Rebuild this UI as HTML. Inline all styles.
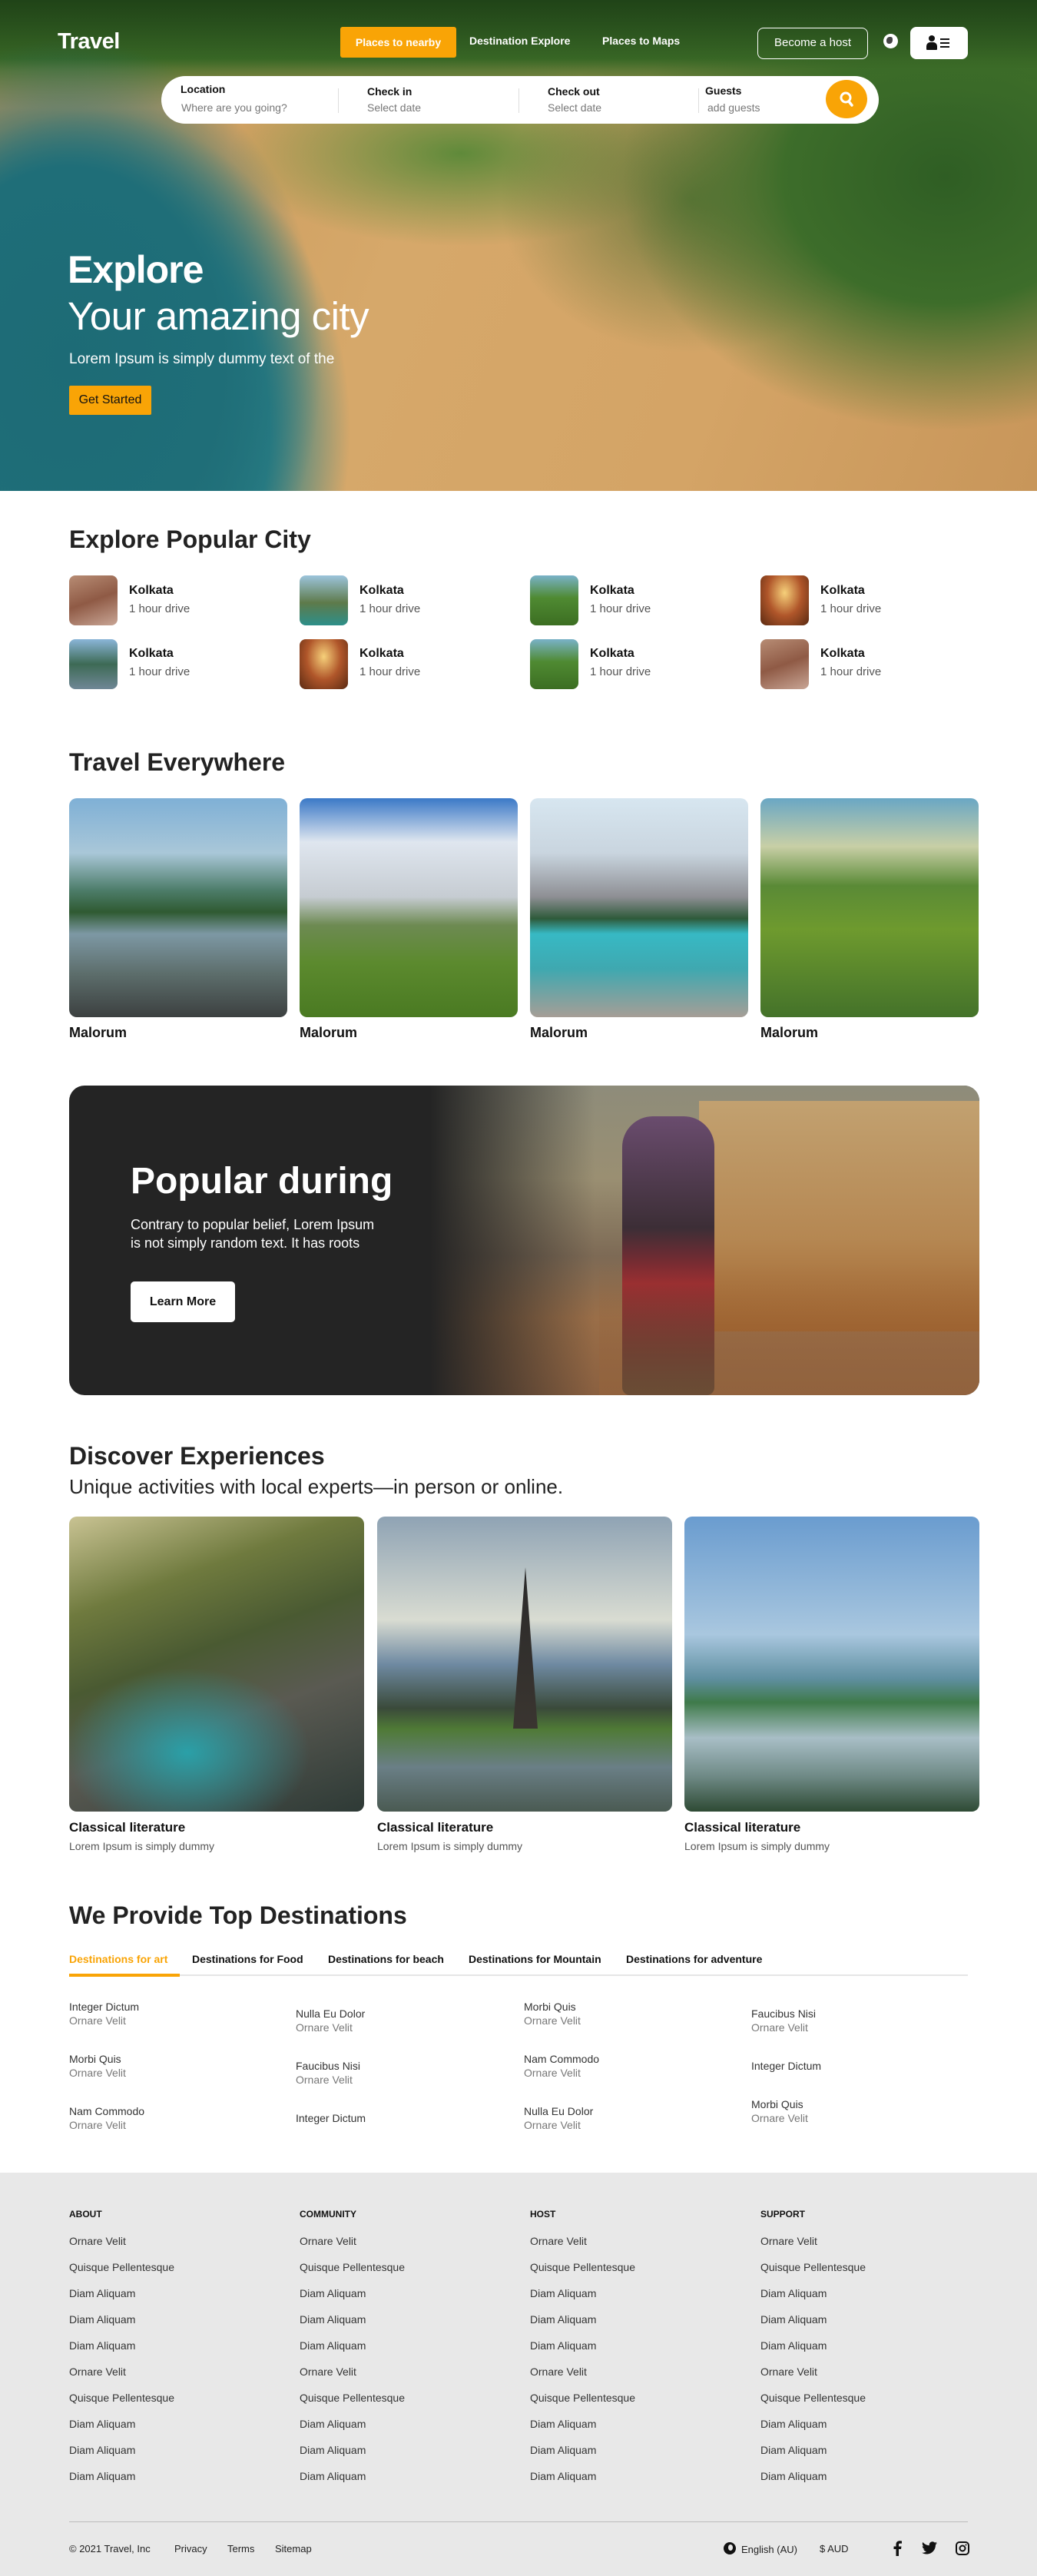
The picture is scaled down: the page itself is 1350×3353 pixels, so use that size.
<!DOCTYPE html>
<html><head><meta charset="utf-8"><style>
*{margin:0;padding:0;box-sizing:border-box}
body{width:1350px;height:3353px;position:relative;font-family:"Liberation Sans",Arial,sans-serif;background:#fff;color:#222;overflow:hidden}
.a{position:absolute}
.hero{left:0;top:0;width:1350px;height:639px;overflow:hidden;
background:
radial-gradient(ellipse 330px 420px at 90px 470px,#1d6b76 0%,#1f6e78 60%,rgba(31,110,120,0) 100%),
radial-gradient(ellipse 420px 520px at 120px 560px,#1a5f6b 0%,#2a7f86 55%,rgba(42,127,134,0) 80%),
linear-gradient(180deg,#2f5a22 0%,#3b6b27 12%,rgba(90,110,50,.0) 22%),
radial-gradient(ellipse 420px 330px at 1230px 230px,#2f5e24 0%,#3d6d2a 50%,rgba(53,101,42,0) 100%),
radial-gradient(ellipse 250px 200px at 900px 260px,rgba(60,100,40,.7) 0%,rgba(60,100,40,0) 100%),
radial-gradient(ellipse 300px 120px at 600px 200px,#5f8a3a 0%,rgba(95,138,58,0) 100%),
linear-gradient(110deg,#c69656 0%,#d6a86a 40%,#d4a466 70%,#c8965a 100%)}
.nav{color:#fff;font-size:15px;font-weight:bold}
.th{width:63px;height:65px;border-radius:8px}
.ct{font-size:16px;font-weight:bold;color:#111}
.cs{font-size:15px;color:#555}
.card{border-radius:10px}
h2{font-size:32px;font-weight:bold;color:#222;position:absolute;line-height:1}
.lab{font-size:18px;font-weight:bold;color:#111}
.dt{font-size:14px;color:#333}
.ds{font-size:14px;color:#777}
.fh{font-size:12px;font-weight:bold;color:#111}
.fl{font-size:14px;color:#333}
</style></head><body>

<div class="a hero"></div>
<div class="a" style="left:0;top:0;width:1350px;height:90px;background:linear-gradient(180deg,rgba(20,50,15,.55),rgba(20,50,15,0))"></div>

<div class="a" style="left:75px;top:38px;font-size:29px;font-weight:bold;color:#fff;letter-spacing:-0.5px">Travel</div>
<div class="a nav" style="left:443px;top:35px;width:151px;height:40px;background:#f9a406;border-radius:3px;text-align:center;line-height:40px;font-size:14px">Places to nearby</div>
<div class="a nav" style="left:611px;top:45px;font-size:14px">Destination Explore</div>
<div class="a nav" style="left:784px;top:45px;font-size:14px">Places to Maps</div>
<div class="a" style="left:986px;top:36px;width:144px;height:41px;border:1.5px solid #fff;border-radius:8px;color:#fff;font-size:15px;text-align:center;line-height:38px">Become a host</div>
<div class="a" style="left:1150px;top:44px;width:19px;height:19px;border-radius:50%;background:#fff"><div style="margin:4px 0 0 4px;width:8px;height:9px;border-radius:50% 30% 50% 40%;background:#444"></div></div>
<div class="a" style="left:1185px;top:35px;width:75px;height:42px;background:#fff;border-radius:8px">
<div class="a" style="left:24px;top:11px;width:8px;height:8px;border-radius:50%;background:#111"></div>
<div class="a" style="left:21px;top:20px;width:14px;height:10px;border-radius:5px 5px 1px 1px;background:#111"></div>
<div class="a" style="left:39px;top:15px;width:12px;height:2px;background:#111;box-shadow:0 5px 0 #111,0 10px 0 #111"></div>
</div>

<div class="a" style="left:210px;top:99px;width:934px;height:62px;background:#fff;border-radius:31px"></div>
<div class="a" style="left:235px;top:108px;font-size:14px;font-weight:bold;color:#111">Location</div>
<div class="a" style="left:236px;top:132px;font-size:14px;color:#777">Where are you going?</div>
<div class="a" style="left:440px;top:115px;width:1px;height:32px;background:#ddd"></div>
<div class="a" style="left:478px;top:111px;font-size:14px;font-weight:bold;color:#111">Check in</div>
<div class="a" style="left:478px;top:132px;font-size:14px;color:#777">Select date</div>
<div class="a" style="left:675px;top:115px;width:1px;height:32px;background:#ddd"></div>
<div class="a" style="left:713px;top:111px;font-size:14px;font-weight:bold;color:#111">Check out</div>
<div class="a" style="left:713px;top:132px;font-size:14px;color:#777">Select date</div>
<div class="a" style="left:909px;top:115px;width:1px;height:32px;background:#ddd"></div>
<div class="a" style="left:918px;top:110px;font-size:14px;font-weight:bold;color:#111">Guests</div>
<div class="a" style="left:921px;top:132px;font-size:14px;color:#777">add guests</div>
<div class="a" style="left:1075px;top:104px;width:54px;height:50px;border-radius:50%;background:#f9a406">
<svg width="54" height="50" viewBox="0 0 54 50"><circle cx="26" cy="23" r="6" fill="none" stroke="#fff" stroke-width="3"/><line x1="30" y1="28" x2="34" y2="33" stroke="#fff" stroke-width="3.5" stroke-linecap="round"/></svg></div>

<div class="a" style="left:88px;top:322px;font-size:50px;font-weight:bold;color:#fff;letter-spacing:-1px">Explore</div>
<div class="a" style="left:88px;top:382px;font-size:51px;color:#fff;letter-spacing:-0.5px">Your amazing city</div>
<div class="a" style="left:90px;top:457px;font-size:19px;color:#fff">Lorem Ipsum is simply dummy text of the</div>
<div class="a" style="left:90px;top:502px;width:107px;height:38px;background:#f9a406;color:#111;font-size:16px;text-align:center;line-height:38px;border-radius:2px">Get Started</div>

<h2 style="left:90px;top:686px">Explore Popular City</h2>

<div class="a th" style="left:90px;top:749px;background:linear-gradient(160deg,#b78c74,#8f5a45 50%,#c8a595)"></div>
<div class="a th" style="left:390px;top:749px;background:linear-gradient(180deg,#9cc4dc,#5e7a4a 55%,#2d8f8a)"></div>
<div class="a th" style="left:690px;top:749px;background:linear-gradient(180deg,#79b2c8,#4f8a32 45%,#3c6e22)"></div>
<div class="a th" style="left:990px;top:749px;background:radial-gradient(ellipse at 50% 35%,#f6d07a,#b0562a 50%,#5a2a12)"></div>
<div class="a th" style="left:90px;top:832px;background:linear-gradient(180deg,#8ab5d8,#3d6a55 50%,#6f8796)"></div>
<div class="a th" style="left:390px;top:832px;background:radial-gradient(ellipse at 50% 35%,#f6d07a,#b0562a 50%,#5a2a12)"></div>
<div class="a th" style="left:690px;top:832px;background:linear-gradient(180deg,#79b2c8,#4f8a32 45%,#3c6e22)"></div>
<div class="a th" style="left:990px;top:832px;background:linear-gradient(160deg,#b78c74,#8f5a45 50%,#c8a595)"></div>
<div class="a" style="left:168px;top:760px"><div class="ct">Kolkata</div><div class="cs" style="margin-top:6px">1 hour drive</div></div>
<div class="a" style="left:468px;top:760px"><div class="ct">Kolkata</div><div class="cs" style="margin-top:6px">1 hour drive</div></div>
<div class="a" style="left:768px;top:760px"><div class="ct">Kolkata</div><div class="cs" style="margin-top:6px">1 hour drive</div></div>
<div class="a" style="left:1068px;top:760px"><div class="ct">Kolkata</div><div class="cs" style="margin-top:6px">1 hour drive</div></div>
<div class="a" style="left:168px;top:842px"><div class="ct">Kolkata</div><div class="cs" style="margin-top:6px">1 hour drive</div></div>
<div class="a" style="left:468px;top:842px"><div class="ct">Kolkata</div><div class="cs" style="margin-top:6px">1 hour drive</div></div>
<div class="a" style="left:768px;top:842px"><div class="ct">Kolkata</div><div class="cs" style="margin-top:6px">1 hour drive</div></div>
<div class="a" style="left:1068px;top:842px"><div class="ct">Kolkata</div><div class="cs" style="margin-top:6px">1 hour drive</div></div>

<h2 style="left:90px;top:976px">Travel Everywhere</h2>
<div class="a card" style="left:90px;top:1039px;width:284px;height:285px;background:linear-gradient(180deg,#7fb0d6 0%,#a9c7d8 25%,#4d7d6a 42%,#2f5a32 52%,#7d98a4 62%,#5d6e6c 80%,#3c4040 100%)"></div>
<div class="a card" style="left:390px;top:1039px;width:284px;height:285px;background:linear-gradient(180deg,#3b79c7 0%,#dfe6ef 20%,#c6ccd2 45%,#6d8a52 58%,#5c8a2e 75%,#4a7a22 100%)"></div>
<div class="a card" style="left:690px;top:1039px;width:284px;height:285px;background:linear-gradient(180deg,#d7e6f0 0%,#c9d5df 25%,#8e8f94 45%,#2e5a3a 55%,#37b9c4 62%,#3fa8b0 78%,#a69e96 100%)"></div>
<div class="a card" style="left:990px;top:1039px;width:284px;height:285px;background:linear-gradient(180deg,#6aa7c4 0%,#c8cfa6 22%,#5a8a36 40%,#6e9a2e 60%,#44722a 100%)"></div>
<div class="a lab" style="left:90px;top:1334px">Malorum</div>
<div class="a lab" style="left:390px;top:1334px">Malorum</div>
<div class="a lab" style="left:690px;top:1334px">Malorum</div>
<div class="a lab" style="left:990px;top:1334px">Malorum</div>

<div class="a" style="left:90px;top:1413px;width:1185px;height:403px;border-radius:20px;overflow:hidden;background:#242424">
<div class="a" style="left:470px;top:0;width:715px;height:403px;background:
linear-gradient(90deg,#242424 0%,rgba(36,36,36,.6) 12%,rgba(36,36,36,0) 30%),
linear-gradient(180deg,#8e8c7a 0%,#9a8f72 30%,#7d6a55 55%,#9a6e48 75%,#8a6040 100%)"></div>
<div class="a" style="left:820px;top:20px;width:365px;height:300px;background:linear-gradient(180deg,#c2a170,#b58752 60%,#a0622c)"></div>
<div class="a" style="left:720px;top:40px;width:120px;height:363px;border-radius:40px 40px 10px 10px;background:linear-gradient(180deg,#6a4c6e,#3c2e36 40%,#9a2a30 60%,#2a2a2a)"></div>
<div class="a" style="left:690px;top:230px;width:495px;height:173px;background:linear-gradient(180deg,rgba(120,90,60,0),rgba(150,100,60,.6))"></div>
</div>
<div class="a" style="left:170px;top:1510px;font-size:48px;font-weight:bold;color:#fff">Popular during</div>
<div class="a" style="left:170px;top:1582px;font-size:18px;color:#fff;line-height:24px">Contrary to popular belief, Lorem Ipsum<br>is not simply random text. It has roots</div>
<div class="a" style="left:170px;top:1668px;width:136px;height:53px;background:#fff;border-radius:5px;text-align:center;line-height:53px;font-size:16px;font-weight:bold;color:#111">Learn More</div>

<h2 style="left:90px;top:1879px">Discover Experiences</h2>
<div class="a" style="left:90px;top:1920px;font-size:26px;color:#222">Unique activities with local experts—in person or online.</div>
<div class="a card" style="left:90px;top:1974px;width:384px;height:384px;background:radial-gradient(ellipse 160px 110px at 40% 80%,#2aa0a8,rgba(40,150,160,0) 100%),linear-gradient(160deg,#c9c393 0%,#6f7a3e 25%,#4a5a32 45%,#5a5a52 65%,#2e3a36 100%)"></div>
<div class="a card" style="left:491px;top:1974px;width:384px;height:384px;background:linear-gradient(180deg,#8fa3b4 0%,#d9dcd2 35%,#6f8aa2 50%,#3a4a3a 65%,#4f7a36 72%,#6a7f86 85%,#4a5a52 100%)"></div>
<div class="a" style="left:668px;top:2040px;width:32px;height:210px;background:linear-gradient(180deg,#2a2a2a,#3a3530);clip-path:polygon(50% 0,100% 100%,0 100%)"></div>
<div class="a card" style="left:891px;top:1974px;width:384px;height:384px;background:linear-gradient(180deg,#6a9ccf 0%,#a9c7df 40%,#5f8fa0 55%,#3f7a4a 63%,#a8bec6 75%,#6f8a86 88%,#2e4a34 100%)"></div>
<div class="a lab" style="left:90px;top:2369px;font-size:17px">Classical literature</div>
<div class="a lab" style="left:491px;top:2369px;font-size:17px">Classical literature</div>
<div class="a lab" style="left:891px;top:2369px;font-size:17px">Classical literature</div>
<div class="a" style="left:90px;top:2395px;font-size:14px;color:#555">Lorem Ipsum is simply dummy</div>
<div class="a" style="left:491px;top:2395px;font-size:14px;color:#555">Lorem Ipsum is simply dummy</div>
<div class="a" style="left:891px;top:2395px;font-size:14px;color:#555">Lorem Ipsum is simply dummy</div>

<h2 style="left:90px;top:2477px">We Provide Top Destinations</h2>
<div class="a" style="left:90px;top:2542px;font-size:14px;font-weight:bold;color:#f9a406">Destinations for art</div>
<div class="a" style="left:250px;top:2542px;font-size:14px;font-weight:bold;color:#111">Destinations for Food</div>
<div class="a" style="left:427px;top:2542px;font-size:14px;font-weight:bold;color:#111">Destinations for beach</div>
<div class="a" style="left:610px;top:2542px;font-size:14px;font-weight:bold;color:#111">Destinations for Mountain</div>
<div class="a" style="left:815px;top:2542px;font-size:14px;font-weight:bold;color:#111">Destinations for adventure</div>
<div class="a" style="left:90px;top:2570px;width:1170px;height:2px;background:#e6e6e6"></div>
<div class="a" style="left:90px;top:2569px;width:144px;height:4px;background:#f9a406"></div>

<div class="a" style="left:90px;top:2604px"><div class="dt">Integer Dictum</div><div class="ds" style="margin-top:2px">Ornare Velit</div></div>
<div class="a" style="left:385px;top:2613px"><div class="dt">Nulla Eu Dolor</div><div class="ds" style="margin-top:2px">Ornare Velit</div></div>
<div class="a" style="left:682px;top:2604px"><div class="dt">Morbi Quis</div><div class="ds" style="margin-top:2px">Ornare Velit</div></div>
<div class="a" style="left:978px;top:2613px"><div class="dt">Faucibus Nisi</div><div class="ds" style="margin-top:2px">Ornare Velit</div></div>
<div class="a" style="left:90px;top:2672px"><div class="dt">Morbi Quis</div><div class="ds" style="margin-top:2px">Ornare Velit</div></div>
<div class="a" style="left:385px;top:2681px"><div class="dt">Faucibus Nisi</div><div class="ds" style="margin-top:2px">Ornare Velit</div></div>
<div class="a" style="left:682px;top:2672px"><div class="dt">Nam Commodo</div><div class="ds" style="margin-top:2px">Ornare Velit</div></div>
<div class="a" style="left:978px;top:2681px"><div class="dt">Integer Dictum</div></div>
<div class="a" style="left:90px;top:2740px"><div class="dt">Nam Commodo</div><div class="ds" style="margin-top:2px">Ornare Velit</div></div>
<div class="a" style="left:385px;top:2749px"><div class="dt">Integer Dictum</div></div>
<div class="a" style="left:682px;top:2740px"><div class="dt">Nulla Eu Dolor</div><div class="ds" style="margin-top:2px">Ornare Velit</div></div>
<div class="a" style="left:978px;top:2731px"><div class="dt">Morbi Quis</div><div class="ds" style="margin-top:2px">Ornare Velit</div></div>

<div class="a" style="left:0;top:2828px;width:1350px;height:525px;background:#e8e8e8"></div>
<div class="a" style="left:90px;top:2875px;width:1200px">
<div style="display:flex">
<div style="width:300px"><div class="fh">ABOUT</div></div>
<div style="width:300px"><div class="fh">COMMUNITY</div></div>
<div style="width:300px"><div class="fh">HOST</div></div>
<div style="width:300px"><div class="fh">SUPPORT</div></div>
</div></div>
<div class="a" style="left:90px;top:2900px;display:flex">
<div style="width:300px;line-height:34px" class="fl">Ornare Velit<br>Quisque Pellentesque<br>Diam Aliquam<br>Diam Aliquam<br>Diam Aliquam<br>Ornare Velit<br>Quisque Pellentesque<br>Diam Aliquam<br>Diam Aliquam<br>Diam Aliquam</div>
<div style="width:300px;line-height:34px" class="fl">Ornare Velit<br>Quisque Pellentesque<br>Diam Aliquam<br>Diam Aliquam<br>Diam Aliquam<br>Ornare Velit<br>Quisque Pellentesque<br>Diam Aliquam<br>Diam Aliquam<br>Diam Aliquam</div>
<div style="width:300px;line-height:34px" class="fl">Ornare Velit<br>Quisque Pellentesque<br>Diam Aliquam<br>Diam Aliquam<br>Diam Aliquam<br>Ornare Velit<br>Quisque Pellentesque<br>Diam Aliquam<br>Diam Aliquam<br>Diam Aliquam</div>
<div style="width:300px;line-height:34px" class="fl">Ornare Velit<br>Quisque Pellentesque<br>Diam Aliquam<br>Diam Aliquam<br>Diam Aliquam<br>Ornare Velit<br>Quisque Pellentesque<br>Diam Aliquam<br>Diam Aliquam<br>Diam Aliquam</div>
</div>
<div class="a" style="left:90px;top:3282px;width:1170px;height:1px;background:#bbb"></div>
<div class="a" style="left:90px;top:3310px;font-size:13px;color:#222">© 2021 Travel, Inc</div>
<div class="a" style="left:227px;top:3310px;font-size:13px;color:#222">Privacy</div>
<div class="a" style="left:296px;top:3310px;font-size:13px;color:#222">Terms</div>
<div class="a" style="left:358px;top:3310px;font-size:13px;color:#222">Sitemap</div>
<div class="a" style="left:942px;top:3309px;width:16px;height:16px;border-radius:50%;background:#111"><div style="margin:3px 0 0 6px;width:6px;height:8px;border-radius:50%;background:#e8e8e8"></div></div>
<div class="a" style="left:965px;top:3311px;font-size:13px;color:#222">English (AU)</div>
<div class="a" style="left:1067px;top:3310px;font-size:13px;color:#222">$ AUD</div>
<svg class="a" style="left:1162px;top:3307px" width="12" height="20" viewBox="0 0 12 20"><path d="M8 20V11h3l.5-3.5H8V5.3c0-1 .3-1.7 1.8-1.7H12V.5C11.6.4 10.4.3 9.1.3 6.3.3 4.5 2 4.5 5v2.5H1.5V11h3v9z" fill="#111"/></svg>
<svg class="a" style="left:1200px;top:3308px" width="20" height="17" viewBox="0 0 24 20"><path d="M24 2.4c-.9.4-1.8.7-2.8.8 1-.6 1.800-1.6 2.2-2.7-1 .6-2 1-3.1 1.2C19.3.7 18 .1 16.6.1c-2.7 0-4.9 2.2-4.9 4.9 0 .4 0 .8.1 1.1C7.7 5.9 4.1 4 1.7 1 1.2 1.7 1 2.6 1 3.5c0 1.7.9 3.2 2.2 4.100-.8 0-1.6-.2-2.2-.6v.1c0 2.4 1.7 4.4 3.9 4.8-.4.1-.8.2-1.3.2-.3 0-.6 0-.9-.1.6 2 2.4 3.4 4.6 3.4-1.7 1.3-3.800 2.1-6.1 2.1-.4 0-.8 0-1.2-.1 2.2 1.4 4.8 2.2 7.5 2.2 9.1 0 14-7.5 14-14v-.6c1-.7 1.8-1.6 2.5-2.6z" fill="#111"/></svg>
<svg class="a" style="left:1244px;top:3308px" width="18" height="18" viewBox="0 0 18 18"><rect x="1" y="1" width="16" height="16" rx="4" fill="none" stroke="#111" stroke-width="2"/><circle cx="9" cy="9" r="3.5" fill="none" stroke="#111" stroke-width="2"/><circle cx="13.5" cy="4.5" r="1" fill="#111"/></svg>
</body></html>
